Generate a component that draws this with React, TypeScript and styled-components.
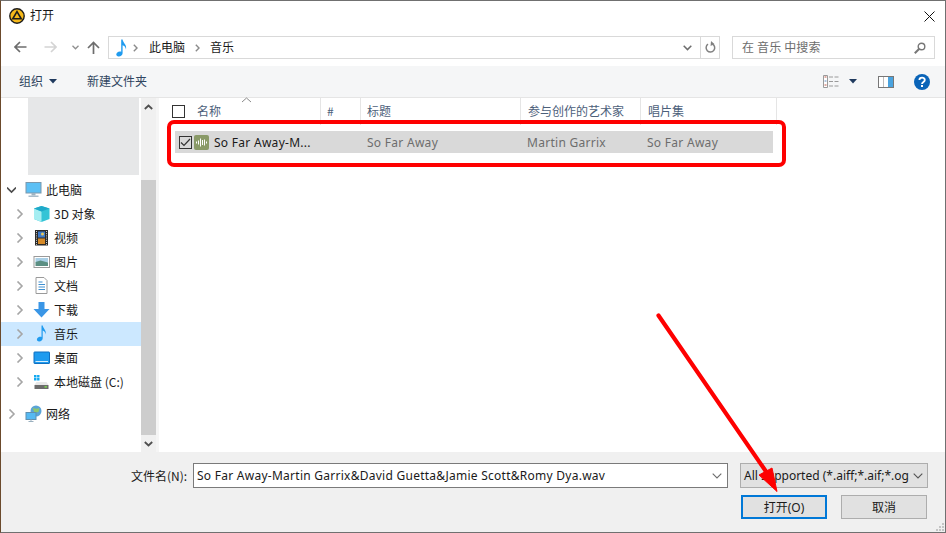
import React from 'react';
import styled, { createGlobalStyle } from 'styled-components';

const Global = createGlobalStyle`
  html, body { margin: 0; padding: 0; background: #fff; overflow: hidden; }
  * { box-sizing: border-box; }
`;

const Window = styled.div`
  position: relative;
  width: 946px;
  height: 533px;
  display: flex;
  flex-direction: column;
  background: #fff;
  border-top: 1px solid #707070;
  border-right: 1px solid #707070;
  border-bottom: 1px solid #707070;
  border-left: 1px solid #6b4a2c;
  font-family: "Noto Sans", "Noto Sans CJK SC", sans-serif;
  font-size: 12px;
  color: #1a1a1a;
`;

const TitleBar = styled.div`
  height: 30px;
  flex: none;
  display: flex;
  align-items: center;
  padding: 0 10px 0 8px;
  gap: 5px;
`;

const TitleText = styled.span`
  flex: 1;
  padding-bottom: 3px;
  font-family: "Noto Sans CJK SC", sans-serif;
`;

const NavBar = styled.div`
  height: 35px;
  flex: none;
  display: flex;
  align-items: flex-start;
  padding: 5px 12px 0 8px;
`;

const NavButtons = styled.div`
  width: 99px;
  height: 22px;
  flex: none;
  display: flex;
  align-items: center;
`;

const NavGlyph = styled.svg<{ $gap: number }>`
  flex: none;
  margin-left: ${({ $gap }) => $gap}px;
`;

const AddressBox = styled.div`
  width: 612px;
  height: 23px;
  flex: none;
  display: flex;
  align-items: center;
  border: 1px solid #d9d9d9;
  padding-left: 3px;
`;

const Crumb = styled.span`
  padding-bottom: 2px;
  font-family: "Noto Sans CJK SC", sans-serif;
  color: #1a1a1a;
`;

const CrumbSep = styled.svg<{ $before: number; $after: number }>`
  flex: none;
  margin: 0 ${({ $after }) => $after}px 0 ${({ $before }) => $before}px;
`;

const AddressEnd = styled.div`
  margin-left: auto;
  height: 100%;
  display: flex;
  align-items: center;
`;

const RefreshCell = styled.div`
  width: 19px;
  height: 100%;
  margin-left: 8px;
  border-left: 1px solid #d9d9d9;
  display: flex;
  align-items: center;
  justify-content: center;
`;

const SearchBox = styled.div`
  width: 203px;
  height: 23px;
  flex: none;
  margin-left: 12px;
  display: flex;
  align-items: center;
  justify-content: space-between;
  border: 1px solid #d9d9d9;
  padding: 0 8px 0 9px;
  color: #6d6d6d;
  font-family: "Noto Sans CJK SC", sans-serif;
`;

const SearchHint = styled.span`
  padding-bottom: 2px;
  letter-spacing: 0.15px;
`;

const Toolbar = styled.div`
  height: 32px;
  flex: none;
  display: flex;
  align-items: center;
  background: #f5f6f7;
  border-bottom: 1px solid #e5e5e5;
  padding: 0 15px 0 18px;
  color: #2f4560;
  font-family: "Noto Sans CJK SC", sans-serif;
`;

const ToolLabel = styled.span<{ $gap?: number }>`
  margin-left: ${({ $gap }) => $gap ?? 0}px;
  padding-bottom: 2px;
`;

const ToolIcon = styled.svg<{ $gap: number }>`
  flex: none;
  margin-left: ${({ $gap }) => $gap}px;
`;

const ToolSpacer = styled.div`
  flex: 1;
`;

const Body = styled.div`
  height: 354px;
  flex: none;
  display: flex;
`;

const Sidebar = styled.div`
  width: 140px;
  flex: none;
  overflow: hidden;
`;

const RecentBlock = styled.div`
  width: 111px;
  height: 77px;
  margin: 0 0 3px 27px;
  background: #e6e7e8;
`;

const TreeRow = styled.div<{ $level: number; $selected?: boolean; $top?: number }>`
  height: 24px;
  display: flex;
  align-items: center;
  margin-top: ${({ $top }) => $top ?? 0}px;
  padding-left: ${({ $level }) => ($level === 0 ? 6 : 14)}px;
  background: ${({ $selected }) => ($selected ? '#cce8ff' : 'transparent')};
  font-family: "Noto Sans CJK SC", sans-serif;
  white-space: nowrap;
`;

const TreeChevron = styled.svg`
  flex: none;
  width: 9px;
  height: 10px;
  margin-right: 9px;
`;

const TreeIcon = styled.svg`
  flex: none;
  width: 18px;
  height: 18px;
  margin-right: 3px;
`;

const TreeText = styled.span`
  padding-bottom: 2px;
`;

const Scrollbar = styled.div`
  width: 15px;
  flex: none;
  display: flex;
  flex-direction: column;
  background: #f0f0f0;
`;

const ScrollCap = styled.div`
  height: 17px;
  flex: none;
  display: flex;
  align-items: center;
  justify-content: center;
`;

const ScrollTrack = styled.div`
  flex: 1;
  display: flex;
  flex-direction: column;
  padding: 65px 0 0;
`;

const ScrollThumb = styled.div`
  height: 255px;
  background: #cdcdcd;
`;

const Divider = styled.div`
  width: 3px;
  flex: none;
  background: #f5f5f5;
`;

const Main = styled.div`
  flex: 1;
  min-width: 0;
`;

const HeaderRow = styled.div`
  height: 27px;
  display: flex;
  color: #4c607a;
  font-family: "Noto Sans CJK SC", sans-serif;
`;

const HeaderCell = styled.div<{ $width: number; $pad: number }>`
  width: ${({ $width }) => $width}px;
  flex: none;
  display: flex;
  align-items: center;
  padding-left: ${({ $pad }) => $pad}px;
  border-right: 1px solid #e5e5e5;
`;

const HeaderLabel = styled.span`
  padding-bottom: 2px;
`;

const CheckBox = styled.span<{ $gap: number }>`
  width: 13px;
  height: 13px;
  flex: none;
  margin-right: ${({ $gap }) => $gap}px;
  border: 1px solid #333;
  background: transparent;
  display: flex;
  align-items: center;
  justify-content: center;
`;

const FileRow = styled.div`
  width: 598px;
  height: 22px;
  margin: 6px 0 0 16px;
  display: flex;
  align-items: center;
  background: #d9d9d9;
  color: #6d6d6d;
  letter-spacing: 0.28px;
`;

const NameCell = styled.div`
  width: 192px;
  flex: none;
  display: flex;
  align-items: center;
  padding-left: 4px;
  color: #1a1a1a;
`;

const FileBadge = styled.svg`
  flex: none;
  margin: 0 5px 0 2px;
`;

const ValueCell = styled.div<{ $width: number }>`
  width: ${({ $width }) => $width}px;
  flex: none;
`;

const Footer = styled.div`
  flex: 1;
  background: #f0f0f0;
  padding: 11px 17px 0 130px;
`;

const FieldRow = styled.div`
  display: flex;
  align-items: center;
`;

const FieldLabel = styled.span`
  width: 62px;
  flex: none;
  font-family: "Noto Sans CJK SC", sans-serif;
  font-size: 12px;
`;

const FileInput = styled.div`
  width: 535px;
  height: 25px;
  flex: none;
  display: flex;
  align-items: center;
  justify-content: space-between;
  padding: 0 5px 0 3px;
  background: #fff;
  border: 1px solid #7a7a7a;
  letter-spacing: 0.26px;
  white-space: nowrap;
`;

const TypeSelect = styled.div`
  width: 188px;
  height: 25px;
  flex: none;
  margin-left: 12px;
  display: flex;
  align-items: center;
  justify-content: space-between;
  padding: 0 4px 0 3px;
  background: #e1e1e1;
  border: 1px solid #adadad;
  white-space: nowrap;
`;

const SelectArrow = styled.svg`
  flex: none;
`;

const ButtonRow = styled.div`
  display: flex;
  justify-content: flex-end;
  gap: 14px;
  margin-top: 7px;
  padding-right: 1px;
`;

const DialogButton = styled.button<{ $primary?: boolean }>`
  width: 86px;
  height: 24px;
  padding: 0;
  background: #e1e1e1;
  border: ${({ $primary }) => ($primary ? '2px solid #0078d7' : '1px solid #adadad')};
  color: #1a1a1a;
  font-family: "Noto Sans", "Noto Sans CJK SC", sans-serif;
  font-size: 12px;
`;

const Highlight = styled.div`
  position: absolute;
  left: 166px;
  top: 119px;
  width: 619px;
  height: 47px;
  border: 4px solid #fe0000;
  border-radius: 7px;
  pointer-events: none;
`;

const Annotation = styled.svg`
  position: absolute;
  left: -1px;
  top: -1px;
  pointer-events: none;
`;

const Grip = styled.svg`
  position: absolute;
  right: 0;
  bottom: 0;
`;

const SortMark = styled.svg`
  position: absolute;
  left: 240px;
  top: 96px;
`;

const Chevron = ({ open }: { open?: boolean }) => (
  <TreeChevron viewBox="0 0 9 10">
    {open ? (
      <path d="M0 2.5 L4.5 7 L9 2.5" fill="none" stroke="#4d4d4d" strokeWidth="1.6" />
    ) : (
      <path d="M2.5 0.5 L7 5 L2.5 9.5" fill="none" stroke="#a6a6a6" strokeWidth="1.6" />
    )}
  </TreeChevron>
);

const Note = ({ size = 18 }: { size?: number }) => (
  <svg width={size} height={size} viewBox="0 0 18 18">
    <path d="M9.2 0.5 L10.6 0.5 C11 4 15 5.5 14 10.5 C13.8 8 12 6.6 10.6 6.2 L10.6 14.2 C10.6 16.4 8.4 17.6 6.4 17.4 C4.2 17.2 3.6 15.2 5 13.8 C6.2 12.6 8 12.2 9.2 12.8 Z" fill="#1f9bef" />
  </svg>
);

const icons: Record<string, React.ReactNode> = {
  pc: (
    <>
      <rect x="0.5" y="1.5" width="15" height="10.5" fill="#5cc0f5" stroke="#7a98ad" />
      <rect x="6" y="12" width="4" height="2.5" fill="#9fb4c2" />
      <rect x="3" y="14.5" width="10" height="1.5" fill="#a9bcc9" />
    </>
  ),
  cube: (
    <>
      <path d="M8 1 L16 3.5 L16 14 L8 17 L0.5 14 L0.5 3.5 Z" fill="#35c4d6" />
      <path d="M0.5 3.5 L8 6.5 L8 17 L0.5 14 Z" fill="#a5eef2" />
      <path d="M8 1 L16 3.5 L8 6.5 L0.5 3.5 Z" fill="#1fa9c9" />
    </>
  ),
  video: (
    <>
      <rect x="1.5" y="1" width="13" height="15.5" fill="#2a2a2a" />
      <rect x="4.5" y="2.5" width="7" height="6" fill="#3d79c9" />
      <rect x="4.5" y="9.5" width="7" height="5.5" fill="#d68a28" />
      <circle cx="9" cy="5" r="1.5" fill="#e8c95a" />
      <path d="M3 2 V16 M13 2 V16" stroke="#cfcfcf" strokeDasharray="1 1.2" />
    </>
  ),
  picture: (
    <>
      <rect x="0.5" y="3.5" width="15.5" height="11" fill="#fff" stroke="#9a9a9a" />
      <rect x="2" y="5" width="12.5" height="4.5" fill="#a9cfe6" />
      <path d="M2 9 L7 7.5 L14.5 9.5 V13 H2 Z" fill="#5b8f83" />
    </>
  ),
  doc: (
    <>
      <path d="M2.5 0.5 H10.5 L13.5 3.5 V16.5 H2.5 Z" fill="#fff" stroke="#9a9a9a" />
      <path d="M5 5 H9 M5 7.5 H11.5 M5 10 H11.5 M5 12.5 H11.5" stroke="#3f8fd0" />
    </>
  ),
  download: <path d="M5 1 H11 V8 H16 L8 16.5 L0 8 H5 Z" fill="#3a96e6" />,
  music: (
    <path d="M8 0.5 L9.2 0.5 C9.6 3.6 13 5 12.2 9.4 C12 7.4 10.4 6 9.2 5.6 L9.2 13.2 C9.2 15.4 7.2 16.6 5.4 16.4 C3.4 16.2 2.8 14.4 4 13 C5 12 6.8 11.6 8 12 Z" fill="#1f9bef" />
  ),
  desktop: (
    <>
      <rect x="0.5" y="3" width="15.5" height="11.5" rx="0.5" fill="#1f9bef" stroke="#0f6fc0" />
      <path d="M2 12.5 H14.5" stroke="#d8eefc" />
    </>
  ),
  disk: (
    <>
      <path d="M0.5 2 H3 V4.5 H0.5 Z M3.6 2 H6 V4.5 H3.6 Z M0.5 5 H3 V7.5 H0.5 Z M3.6 5 H6 V7.5 H3.6 Z" fill="#12a9f1" />
      <path d="M3 9 H13 L15 12 H1 Z" fill="#e8e8e8" />
      <rect x="1" y="12" width="14" height="4" fill="#6b6b6b" />
      <rect x="11" y="13.2" width="2.4" height="1.4" fill="#7ee04c" />
    </>
  ),
  network: (
    <>
      <circle cx="10.5" cy="6" r="5.5" fill="#5aa4d8" />
      <path d="M7 2.5 C9 4 12 4 14 3 L13 7 L9 8 Z" fill="#8ec76f" />
      <rect x="0.5" y="7.5" width="10" height="7" fill="#55b9f2" stroke="#5e8fb0" />
      <path d="M3 16.5 H8 M5.5 14.5 V16.5" stroke="#9ab0bf" />
    </>
  ),
};

const tree = [
  { label: '此电脑', icon: 'pc', level: 0, open: true },
  { label: '3D 对象', icon: 'cube', level: 1 },
  { label: '视频', icon: 'video', level: 1 },
  { label: '图片', icon: 'picture', level: 1 },
  { label: '文档', icon: 'doc', level: 1 },
  { label: '下载', icon: 'download', level: 1 },
  { label: '音乐', icon: 'music', level: 1, selected: true },
  { label: '桌面', icon: 'desktop', level: 1 },
  { label: '本地磁盘 (C:)', icon: 'disk', level: 1 },
  { label: '网络', icon: 'network', level: 0, top: 8 },
];

const columns = [
  { label: '#', width: 40, pad: 6 },
  { label: '标题', width: 160, pad: 6 },
  { label: '参与创作的艺术家', width: 120, pad: 7 },
  { label: '唱片集', width: 136, pad: 7 },
];

export default function App() {
  return (
    <>
      <Global />
      <Window>
        <TitleBar>
          <svg width="16" height="16" viewBox="0 0 16 16">
            <circle cx="8" cy="8" r="7.2" fill="#f6b91a" stroke="#1c1c1c" strokeWidth="1.4" />
            <path d="M8 3.6 L12.2 10.8 H3.8 Z" fill="none" stroke="#1c1c1c" strokeWidth="1.6" />
          </svg>
          <TitleText>打开</TitleText>
          <svg width="11" height="11" viewBox="0 0 11 11">
            <path d="M0.5 0.5 L10.5 10.5 M10.5 0.5 L0.5 10.5" stroke="#111" strokeWidth="1" />
          </svg>
        </TitleBar>

        <NavBar>
          <NavButtons>
            <NavGlyph $gap={5} width="13" height="12" viewBox="0 0 13 12">
              <path d="M12.5 6 H1.5 M6 1 L1 6 L6 11" fill="none" stroke="#6d6d6d" strokeWidth="1.7" />
            </NavGlyph>
            <NavGlyph $gap={17} width="13" height="12" viewBox="0 0 13 12">
              <path d="M0.5 6 H11.5 M7 1 L12 6 L7 11" fill="none" stroke="#d4d4d4" strokeWidth="1.7" />
            </NavGlyph>
            <NavGlyph $gap={15} width="7" height="5" viewBox="0 0 7 5">
              <path d="M0.5 0.8 L3.5 3.8 L6.5 0.8" fill="none" stroke="#8f8f8f" strokeWidth="1.3" />
            </NavGlyph>
            <NavGlyph $gap={8} width="13" height="13" viewBox="0 0 13 13">
              <path d="M6.5 13 V1.5 M1 7 L6.5 1.5 L12 7" fill="none" stroke="#6d6d6d" strokeWidth="1.7" />
            </NavGlyph>
          </NavButtons>
          <AddressBox>
            <Note />
            <CrumbSep $before={3} $after={11} width="5" height="8" viewBox="0 0 5 8">
              <path d="M0.8 0.8 L4 4 L0.8 7.2" fill="none" stroke="#8a8a8a" strokeWidth="1.4" />
            </CrumbSep>
            <Crumb>此电脑</Crumb>
            <CrumbSep $before={10} $after={10} width="5" height="8" viewBox="0 0 5 8">
              <path d="M0.8 0.8 L4 4 L0.8 7.2" fill="none" stroke="#8a8a8a" strokeWidth="1.4" />
            </CrumbSep>
            <Crumb>音乐</Crumb>
            <AddressEnd>
              <svg width="9" height="6" viewBox="0 0 9 6">
                <path d="M0.7 0.8 L4.5 4.6 L8.3 0.8" fill="none" stroke="#6d6d6d" strokeWidth="1.5" />
              </svg>
              <RefreshCell>
                <svg width="11" height="13" viewBox="0 0 11 13">
                  <path d="M3 3.2 A4.3 4.3 0 1 0 7.5 3" fill="none" stroke="#808080" strokeWidth="1.5" />
                  <path d="M6 0 L9.4 3 L5.6 5 Z" fill="#808080" />
                </svg>
              </RefreshCell>
            </AddressEnd>
          </AddressBox>
          <SearchBox>
            <SearchHint>在 音乐 中搜索</SearchHint>
            <svg width="12" height="12" viewBox="0 0 12 12">
              <circle cx="7.5" cy="4.5" r="3.3" fill="none" stroke="#777" strokeWidth="1.4" />
              <path d="M5 7 L0.8 11.2" stroke="#777" strokeWidth="2" />
            </svg>
          </SearchBox>
        </NavBar>

        <Toolbar>
          <ToolLabel>组织</ToolLabel>
          <ToolIcon $gap={6} width="8" height="5" viewBox="0 0 8 5">
            <path d="M0 0 H8 L4 4.5 Z" fill="#1f3a5e" />
          </ToolIcon>
          <ToolLabel $gap={30}>新建文件夹</ToolLabel>
          <ToolSpacer />
          <ToolIcon $gap={0} width="17" height="13" viewBox="0 0 17 13">
            <path d="M0.5 0.5 H4.5 V12.5 H0.5 Z" fill="#fff" stroke="#9a9a9a" />
            <path d="M1.5 2 H3.5" stroke="#c05a4a" />
            <path d="M1.5 6 H3.5" stroke="#5a8ac0" />
            <path d="M1.5 10 H3.5" stroke="#c05a4a" />
            <path d="M6 2 H16 M6 6.5 H16 M6 11 H16" stroke="#9a9a9a" strokeDasharray="4 1.5" />
          </ToolIcon>
          <ToolIcon $gap={9} width="8" height="5" viewBox="0 0 8 5">
            <path d="M0 0 H8 L4 4.5 Z" fill="#1f3a5e" />
          </ToolIcon>
          <ToolIcon $gap={21} width="16" height="12" viewBox="0 0 16 12">
            <rect x="0.5" y="0.5" width="15" height="11" fill="#fff" stroke="#777" />
            <rect x="10" y="1" width="5" height="10" fill="#4aa3df" />
            <rect x="5" y="1" width="1" height="10" fill="#bdbdbd" />
          </ToolIcon>
          <ToolIcon $gap={20} width="16" height="16" viewBox="0 0 16 16">
            <circle cx="8" cy="8" r="8" fill="#0a64b8" />
            <path d="M5.4 6 C5.4 2.8 10.8 2.8 10.8 6 C10.8 8 8 7.8 8 10" fill="none" stroke="#fff" strokeWidth="1.8" />
            <rect x="7" y="11" width="2" height="2" fill="#fff" />
          </ToolIcon>
        </Toolbar>

        <Body>
          <Sidebar>
            <RecentBlock />
            {tree.map((item) => (
              <TreeRow key={item.label} $level={item.level} $selected={item.selected} $top={item.top}>
                <Chevron open={item.open} />
                <TreeIcon viewBox="0 0 17 18">{icons[item.icon]}</TreeIcon>
                <TreeText>{item.label}</TreeText>
              </TreeRow>
            ))}
          </Sidebar>
          <Scrollbar>
            <ScrollCap>
              <svg width="9" height="6" viewBox="0 0 9 6">
                <path d="M0.8 5 L4.5 1.5 L8.2 5" fill="none" stroke="#505050" strokeWidth="1.8" />
              </svg>
            </ScrollCap>
            <ScrollTrack>
              <ScrollThumb />
            </ScrollTrack>
            <ScrollCap>
              <svg width="9" height="6" viewBox="0 0 9 6">
                <path d="M0.8 1 L4.5 4.5 L8.2 1" fill="none" stroke="#505050" strokeWidth="1.8" />
              </svg>
            </ScrollCap>
          </Scrollbar>
          <Divider />
          <Main>
            <HeaderRow>
              <HeaderCell $width={162} $pad={13}>
                <CheckBox $gap={12} />
                <HeaderLabel>名称</HeaderLabel>
              </HeaderCell>
              {columns.map((col) => (
                <HeaderCell key={col.label} $width={col.width} $pad={col.pad}>
                  <HeaderLabel>{col.label}</HeaderLabel>
                </HeaderCell>
              ))}
            </HeaderRow>
            <FileRow>
              <NameCell>
                <CheckBox $gap={0}>
                  <svg width="11" height="9" viewBox="0 0 11 9">
                    <path d="M1 4.5 L4 7.5 L10 1" fill="none" stroke="#333" strokeWidth="1.2" />
                  </svg>
                </CheckBox>
                <FileBadge width="15" height="15" viewBox="0 0 15 15">
                  <rect width="15" height="15" rx="2" fill="#8a9a68" />
                  <path d="M2.5 6.5 V8.5 M4.5 5.5 V9.5 M6.5 3.5 V11.5 M8.5 5 V10 M10.5 4.5 V10.5 M12.5 6.5 V8.5" stroke="#fff" strokeWidth="1" />
                </FileBadge>
                So Far Away-M...
              </NameCell>
              <ValueCell $width={160}>So Far Away</ValueCell>
              <ValueCell $width={120}>Martin Garrix</ValueCell>
              <ValueCell $width={120}>So Far Away</ValueCell>
            </FileRow>
          </Main>
        </Body>

        <Footer>
          <FieldRow>
            <FieldLabel>文件名(N):</FieldLabel>
            <FileInput>
              So Far Away-Martin Garrix&David Guetta&Jamie Scott&Romy Dya.wav
              <SelectArrow width="10" height="6" viewBox="0 0 10 6">
                <path d="M0.7 0.7 L5 5 L9.3 0.7" fill="none" stroke="#6d6d6d" strokeWidth="1.1" />
              </SelectArrow>
            </FileInput>
            <TypeSelect>
              <span>All supported (*.aiff;*.aif;*.og</span>
              <SelectArrow width="10" height="6" viewBox="0 0 10 6">
                <path d="M0.7 0.7 L5 5 L9.3 0.7" fill="none" stroke="#555" strokeWidth="1.1" />
              </SelectArrow>
            </TypeSelect>
          </FieldRow>
          <ButtonRow>
            <DialogButton $primary>打开(O)</DialogButton>
            <DialogButton>取消</DialogButton>
          </ButtonRow>
        </Footer>

        <SortMark width="11" height="6" viewBox="0 0 11 6">
          <path d="M1 5 L5.5 1 L10 5" fill="none" stroke="#8a8a8a" strokeWidth="1" />
        </SortMark>
        <Highlight />
        <Annotation width="946" height="533" viewBox="0 0 946 533">
          <path d="M658.5 315.5 L767 473" stroke="#fe0000" strokeWidth="4.2" strokeLinecap="round" />
          <path d="M777 491.5 L759 475 L772 468 Z" fill="#fe0000" stroke="#fe0000" strokeWidth="1" strokeLinejoin="round" />
        </Annotation>
        <Grip width="11" height="11" viewBox="0 0 11 11">
          <path d="M8 2 h2 v2 h-2 Z M8 5 h2 v2 h-2 Z M5 5 h2 v2 h-2 Z M8 8 h2 v2 h-2 Z M5 8 h2 v2 h-2 Z M2 8 h2 v2 h-2 Z" fill="#c4c4c4" />
        </Grip>
      </Window>
    </>
  );
}
